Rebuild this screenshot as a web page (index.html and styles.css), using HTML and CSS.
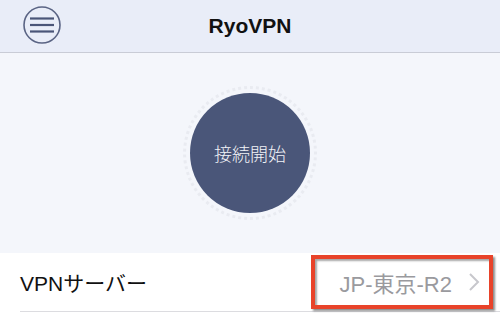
FILE: index.html
```html
<!DOCTYPE html>
<html lang="ja">
<head>
    <meta charset="UTF-8">
    <meta name="viewport" content="width=device-width, initial-scale=1.0">
    <title>RyoVPN</title>
    <link rel="stylesheet" href="styles.css">
</head>
<body>
    <div class="navbar">
        <button class="menu-button" aria-label="メニュー">
            <svg width="40" height="40" viewBox="0 0 40 40">
                <circle cx="20" cy="20" r="18" fill="none" stroke="#5a6484" stroke-width="1.6"/>
                <line x1="8" y1="13.5" x2="32" y2="13.5" stroke="#4a5578" stroke-width="2.2"/>
                <line x1="8" y1="20" x2="32" y2="20" stroke="#4a5578" stroke-width="2.2"/>
                <line x1="8" y1="26.5" x2="32" y2="26.5" stroke="#4a5578" stroke-width="2.2"/>
            </svg>
        </button>
        <h1>RyoVPN</h1>
    </div>

    <div class="connect-area">
        <div class="connect-ring">
            <button class="connect-button">接続開始</button>
        </div>
    </div>

    <div class="settings">
        <div class="setting-row">
            <span class="setting-label">VPNサーバー</span>
            <span class="setting-value">JP-東京-R2 <span class="chevron">
                <svg width="12" height="20" viewBox="0 0 12 20">
                    <polyline points="2,2 10,10 2,18" fill="none" stroke="#c7c7cc" stroke-width="2"/>
                </svg>
            </span></span>
            <div class="highlight"></div>
        </div>
    </div>
</body>
</html>
```

FILE: styles.css
```css
body {
    font-family: "Liberation Sans", "Noto Sans CJK JP", sans-serif;
    margin: 0;
    padding: 0;
    background-color: #f4f6fb;
    width: 500px;
    height: 332px;
    overflow: hidden;
}
.navbar {
    height: 52px;
    background-color: #e9edf8;
    border-bottom: 1px solid #c9ccd6;
    display: flex;
    align-items: center;
    justify-content: center;
    position: relative;
}
.navbar h1 {
    margin: 0;
    font-size: 21px;
    font-weight: bold;
    color: #111;
}
.menu-button {
    position: absolute;
    left: 22px;
    top: 5px;
    width: 40px;
    height: 40px;
    padding: 0;
    border: none;
    background: none;
}
.connect-area {
    height: 200px;
    display: flex;
    align-items: center;
    justify-content: center;
}
.connect-ring {
    width: 134px;
    height: 134px;
    border-radius: 50%;
    border: 3px dotted #e9ebf1;
    display: flex;
    align-items: center;
    justify-content: center;
    box-sizing: border-box;
}
.connect-button {
    width: 120px;
    height: 120px;
    border-radius: 50%;
    border: none;
    background-color: #4a5679;
    color: #f2f3f7;
    font-family: "Noto Sans CJK JP", sans-serif;
    font-size: 18px;
    font-weight: 300;
    padding: 0;
}
.settings {
    background-color: #fff;
    height: 79px;
}
.setting-row {
    position: relative;
    margin-left: 20px;
    height: 58px;
    border-bottom: 1px solid #dcdce0;
    display: flex;
    align-items: center;
    justify-content: space-between;
    padding-right: 20px;
}
.setting-label {
    font-size: 21px;
    color: #111;
}
.setting-value {
    font-size: 22px;
    color: #9a9a9e;
    display: flex;
    align-items: center;
    gap: 16px;
}
.chevron {
    display: flex;
}
.highlight {
    position: absolute;
    left: 291px;
    top: 2px;
    width: 174px;
    height: 46px;
    border: 4px solid #e8432a;
    box-shadow: 2px 2px 2px rgba(0, 0, 0, 0.45), inset 2px 2px 2px rgba(0, 0, 0, 0.35);
}
```
